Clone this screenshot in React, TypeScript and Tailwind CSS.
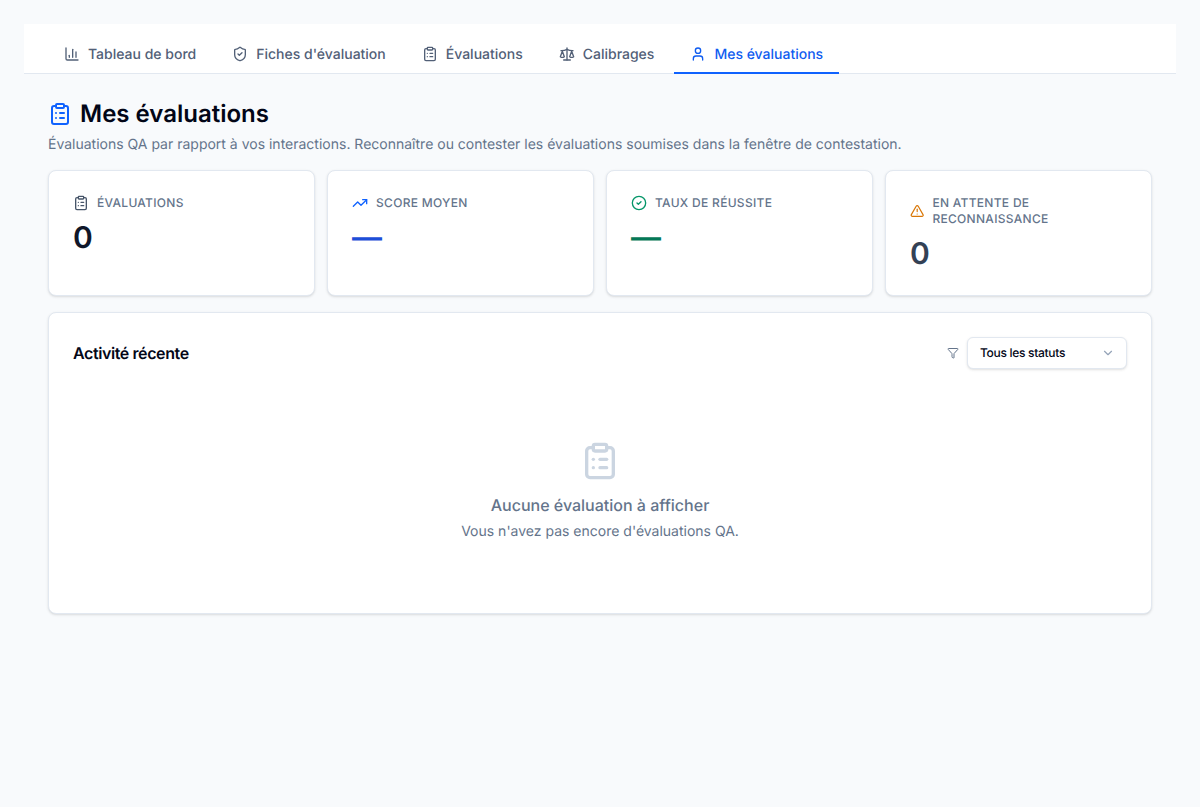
import { BarChart3, ShieldCheck, ClipboardList, Scale, User, TrendingUp, CircleCheck, TriangleAlert, Funnel, ChevronDown } from "lucide-react";

const tabs = [
  { label: "Tableau de bord", icon: BarChart3 },
  { label: "Fiches d'évaluation", icon: ShieldCheck },
  { label: "Évaluations", icon: ClipboardList },
  { label: "Calibrages", icon: Scale },
  { label: "Mes évaluations", icon: User, active: true },
];

const stats = [
  { label: "Évaluations", icon: ClipboardList, iconClass: "text-[#475569]", value: "0", valueClass: "text-[#0f172a]" },
  { label: "Score moyen", icon: TrendingUp, iconClass: "text-[#0f62fe]", value: "—", valueClass: "text-[#1d4ed8]" },
  { label: "Taux de réussite", icon: CircleCheck, iconClass: "text-[#059669]", value: "—", valueClass: "text-[#047857]" },
  { label: "En attente de reconnaissance", icon: TriangleAlert, iconClass: "text-[#d97706]", value: "0", valueClass: "text-[#334155]" },
];

export default function App() {
  return (
    <div className="min-h-[807px] bg-[#f8fafc] pt-6 px-6 font-['Inter',sans-serif] [text-rendering:geometricPrecision]">
      {/* Tabs */}
      <nav className="flex h-[50px] gap-1 bg-white border-b border-[#e2e8f0] px-6 items-end">
        {tabs.map((t) => (
          <div
            key={t.label}
            className={
              "flex items-center gap-2 h-[38px] px-4 text-sm font-medium border-b-2 -mb-px " +
              (t.active ? "border-[#0f62fe] text-[#0f5cf0]" : "border-transparent text-[#526077]")
            }
          >
            <t.icon className="w-4 h-4" />
            <span className="pt-0.5">{t.label}</span>
          </div>
        ))}
      </nav>

      <div className="pt-6 px-6">
        <div className="flex items-center gap-2 h-8">
          <ClipboardList className="w-6 h-6 text-[#0f62fe]" />
          <h1 className="text-2xl font-semibold text-[#020617]">Mes évaluations</h1>
        </div>
        <p className="mt-[5px] text-sm text-[#64748b]">
          Évaluations QA par rapport à vos interactions. Reconnaître ou contester les évaluations soumises dans la fenêtre de contestation.
        </p>

        <div className="grid grid-cols-4 gap-3 mt-[15px]">
          {stats.map((s) => (
            <div key={s.label} className="h-[126px] bg-white border border-[#e2e8f0] rounded-lg shadow-sm p-6">
              <div className="flex items-center gap-2 text-xs font-medium uppercase tracking-wide text-[#64748b] leading-4">
                <s.icon className={"w-4 h-4 " + s.iconClass} />
                <span>{s.label}</span>
              </div>
              <div className={"mt-[9px] text-3xl font-semibold leading-9 " + s.valueClass}>{s.value}</div>
            </div>
          ))}
        </div>

        <section className="mt-4 h-[302px] bg-white border border-[#e2e8f0] rounded-lg shadow-sm p-6">
          <div className="flex items-center justify-between">
            <h2 className="text-base font-semibold tracking-tight text-[#020617]">Activité récente</h2>
            <div className="flex items-center gap-2">
              <Funnel className="w-3 h-3 text-[#64748b]" />
              <div className="flex items-center justify-between w-40 h-8 px-3 bg-white border border-[#e2e8f0] rounded-md shadow-sm text-xs font-medium tracking-tight text-[#020617]">
                Tous les statuts
                <ChevronDown className="w-3.5 h-3.5 -mr-px text-[#94a3b8]" />
              </div>
            </div>
          </div>
          <div className="flex flex-col items-center pt-[72px]">
            <ClipboardList className="w-10 h-10 text-[#cbd5e1]" />
            <p className="mt-3 text-base font-medium text-[#64748b]">Aucune évaluation à afficher</p>
            <p className="mt-[5px] text-sm text-[#64748b]">Vous n'avez pas encore d'évaluations QA.</p>
          </div>
        </section>
      </div>
    </div>
  );
}
